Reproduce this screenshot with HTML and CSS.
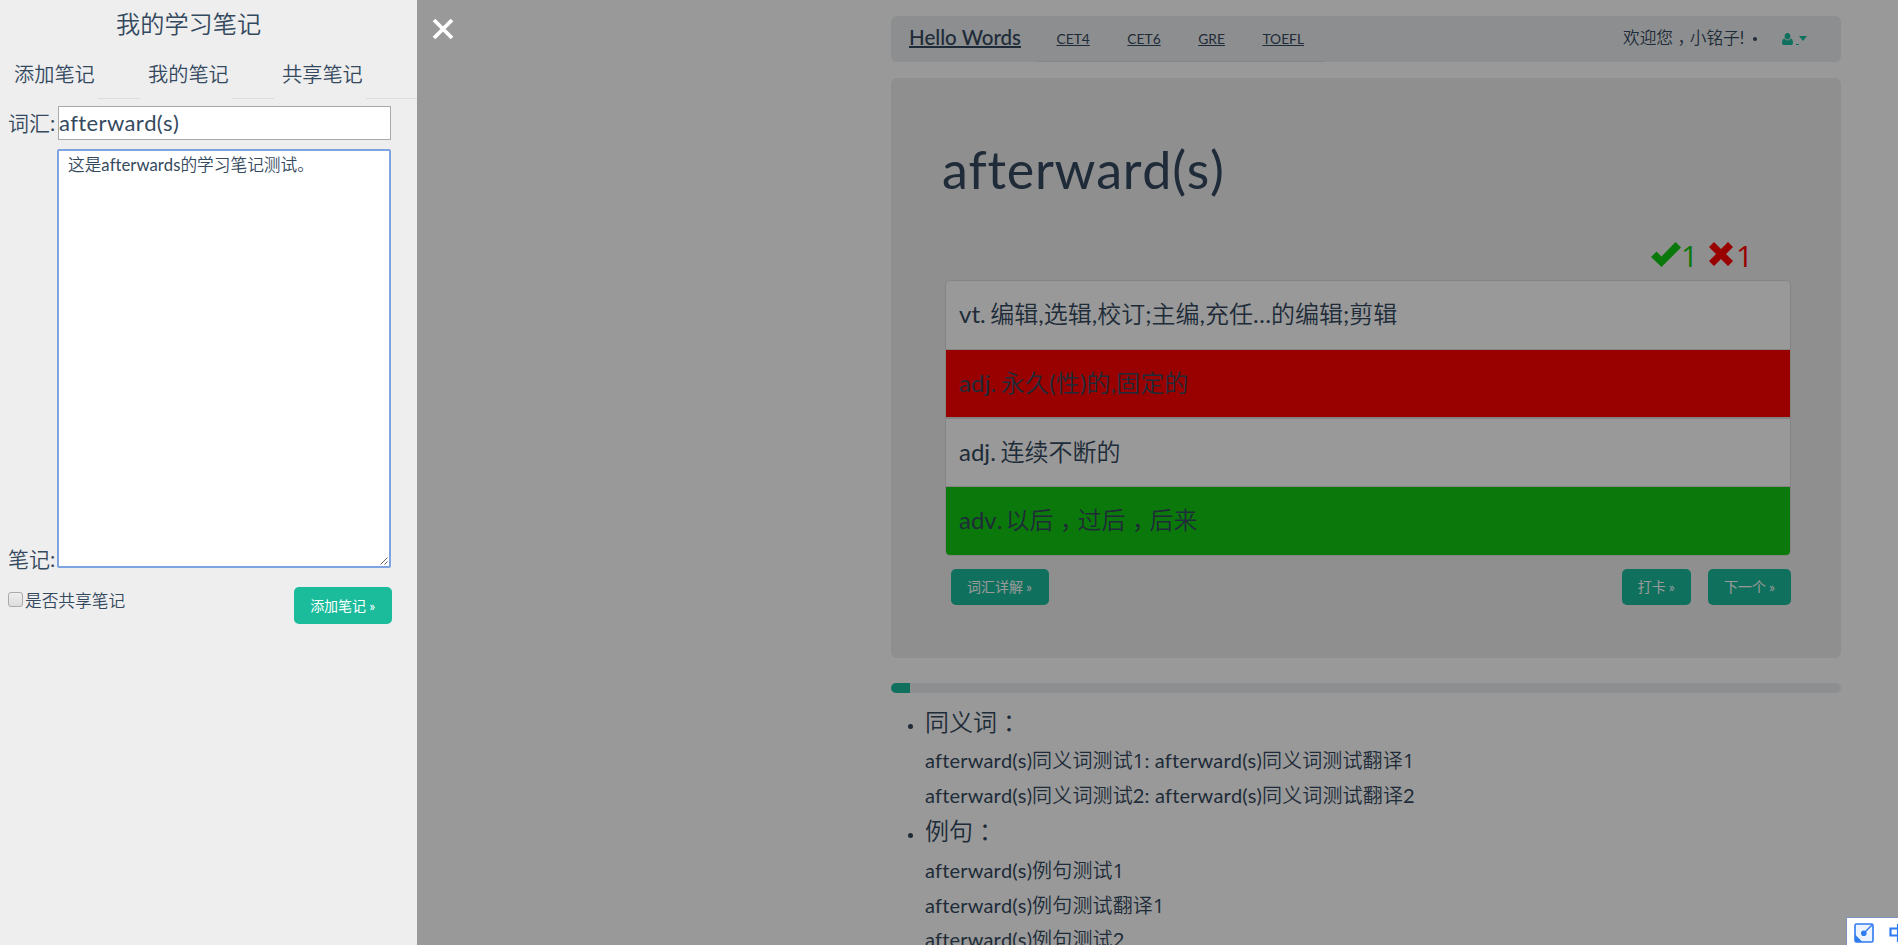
FILE: index.html
```html
<!DOCTYPE html>
<html lang="zh-CN">
<head>
<meta charset="utf-8">
<title>Hello Words</title>
<link rel="stylesheet" href="styles.css">
</head>
<body>
<div class="container">
  <nav class="navbar">
    <a class="brand">Hello Words</a>
    <div class="nav-links"><a>CET4</a><a>CET6</a><a>GRE</a><a>TOEFL</a></div>
    <div class="welcome">欢迎您<span class="comma">，</span>小铭子!</div>
    <i class="dot"></i>
    <a class="user">
      <svg class="user-icon" viewBox="0 0 11 12"><path d="M5.5 0C7.300 0 8.400 1.300 8.400 3.200S7.200 6.500 5.500 6.500 2.600 5.100 2.600 3.200 3.700 0 5.500 0ZM2.400 5.600C3.300 6.900 4.300 7.400 5.500 7.400S7.700 6.900 8.600 5.600C10.400 5.900 11 7.700 11 9.700 11 11.200 10.200 12 9 12H2C.8 12 0 11.200 0 9.700 0 7.700.6 5.900 2.400 5.600Z"/></svg><span class="gap"></span><svg class="caret" viewBox="0 0 8 5"><path d="M0 0h8L4 5z"/></svg>
    </a>
  </nav>
  <main class="card">
    <h1>afterward(s)</h1>
    <div class="score">
      <svg class="check" viewBox="0 0 30 25"><path d="M0 15L5.500 9.500 10.500 14.500 24.500 0 30 5.500 10.500 25Z"/></svg><span class="right">1</span>
      <svg class="cross" viewBox="0 0 24 24"><path d="M5 0L12 7 19 0 24 5 17 12 24 19 19 24 12 17 5 24 0 19 7 12 0 5Z"/></svg><span class="wrong">1</span>
    </div>
    <ul class="options">
      <li>vt. 编辑,选辑,校订;主编,充任…的编辑;剪辑</li>
      <li class="bad">adj. 永久(性)的,固定的</li>
      <li class="third">adj. 连续不断的</li>
      <li class="good">adv. 以后<span class="comma">，</span>过后<span class="comma">，</span>后来</li>
    </ul>
    <div class="actions">
      <a class="btn long">词汇详解 »</a>
      <a class="btn push">打卡 »</a>
      <a class="btn">下一个 »</a>
    </div>
  </main>
  <div class="progress"><div class="bar"></div></div>
  <section class="details">
    <h2>同义词<span class="colon">：</span></h2>
    <p>afterward(s)同义词测试<span class="num">1</span>: afterward(s)同义词测试翻译<span class="num">1</span></p>
    <p>afterward(s)同义词测试2: afterward(s)同义词测试翻译2</p>
    <h2 class="next">例句<span class="colon">：</span></h2>
    <p>afterward(s)例句测试<span class="num">1</span></p>
    <p>afterward(s)例句测试翻译<span class="num">1</span></p>
    <p>afterward(s)例句测试2</p>
  </section>
</div>

<div class="overlay">
  <svg class="close" viewBox="0 0 22 22"><path d="M2 2L20 20M20 2L2 20"/></svg>
</div>

<aside class="notes">
  <h3>我的学习笔记</h3>
  <div class="tabs"><a>添加笔记</a><a>我的笔记</a><a>共享笔记</a></div>
  <div class="field word"><label>词汇:</label><div class="input">afterward(s)</div></div>
  <div class="field memo"><label>笔记:</label>
    <div class="textarea">这是afterwards的学习笔记测试。<svg class="grip" viewBox="0 0 8 8"><path d="M.5 7.500L7.500.5M4.500 7.500L7.500 4.500"/></svg></div>
  </div>
  <div class="submit"><i class="checkbox"></i><span>是否共享笔记</span><a class="btn long">添加笔记 »</a></div>
</aside>

<div class="ime">
  <svg viewBox="0 0 20 20"><rect x="1" y="1" width="18" height="18" rx="1.500" fill="#eef4ff" stroke="#2f7bf0" stroke-width="1.600"/><path d="M1 11.500L8.500 19H1Z" fill="#2f7bf0"/><path d="M10 10L18 2" stroke="#2f7bf0" stroke-width="1.500"/><circle cx="9.800" cy="10.300" r="2.800" fill="#2f7bf0"/></svg>
  <svg class="zh" viewBox="0 0 18 20"><path d="M1.500 5.500h15v7h-15zM9 1v18" fill="none" stroke="#2f7bf0" stroke-width="2.200"/></svg>
</div>
</body>
</html>
```

FILE: styles.css
```css
* { box-sizing: border-box; }
body {
  margin: 0;
  height: 945px;
  overflow: hidden;
  background: #fff;
  color: #34495e;
  font-family: Lato, "Noto Sans CJK SC DemiLight", "Noto Sans CJK SC Light", "Noto Sans CJK SC", sans-serif;
  font-size: 16.7px;
  font-variant-ligatures: none;
}
h1, h2, h3, p, ul { margin: 0; padding: 0; font-weight: 400; list-style: none; }
.comma { margin: 0 .23em 0 .27em; font-feature-settings: "halt"; }
.colon { margin: 1px .25em 0; font-feature-settings: "halt"; }
.num { font-family: "Open Sans", sans-serif; line-height: 1; }

.container { width: 950px; margin-left: 891px; padding-top: 16px; }

.navbar {
  display: flex;
  height: 46px;
  padding-left: 18px;
  border-radius: 6px;
  background: #ebedef;
  line-height: 44px;
}
.brand { width: 129px; font-size: 20.5px; font-weight: 500; line-height: 43px; text-decoration: underline 2px; }
.nav-links {
  display: flex;
  width: 285px;
  gap: 37.5px;
  padding-left: 18.5px;
  border-bottom: 1px solid #ddd;
  font-size: 13.8px;
  line-height: 46px;
}
.nav-links a { text-decoration: underline; }
.welcome { margin-left: 300px; width: 130px; white-space: nowrap; }
.dot { width: 4px; height: 4px; margin-top: 21px; border-radius: 50%; background: #34495e; }
.user { display: flex; align-items: flex-start; margin: 17px 0 0 25px; }
.user svg { display: block; fill: #1abc9c; }
.user-icon { width: 11px; height: 12px; }
.gap { width: 3px; height: 1px; margin: 11px 0 0 3px; background: #1abc9c; }
.caret { width: 8px; height: 5px; margin-top: 3px; }

.card {
  height: 580px;
  margin-top: 16px;
  padding: 57px 50px 0 51px;
  border-radius: 6px;
  background: #eee;
  font-kerning: none;
}
h1 { font-size: 52px; line-height: 68px; letter-spacing: .7px; }
.score {
  display: flex;
  align-items: flex-start;
  justify-content: flex-end;
  height: 36px;
  margin-top: 39px;
  padding-right: 41px;
  font-family: "Open Sans", sans-serif;
  font-size: 30px;
  line-height: 27px;
}
.check { width: 30px; height: 25px; fill: #12c812; }
.right { width: 28px; color: #12c812; }
.cross { width: 24px; height: 24px; fill: #f00; }
.wrong { width: 17px; padding-left: 3px; color: #f00; }
.options {
  width: 846px;
  margin: 2px 0 0 3px;
  border: 1px solid #ddd;
  border-radius: 5px;
  overflow: hidden;
  background: #fff;
  font-size: 24px;
  word-spacing: -1.5px;
}
.options li { height: 69px; padding-left: 13px; border-bottom: 1px solid #ddd; line-height: 65px; }
.options .bad { border-bottom-width: 2px; background: #f00; letter-spacing: .13px; }
.options .third { height: 68px; }
.options .good { height: 68px; border: 0; background: #12c812; word-spacing: -3px; }
.actions { display: flex; gap: 17px; padding: 13px 0 0 9px; }
.push { margin-left: auto; }
.btn {
  display: block;
  height: 36px;
  padding: 0 16px;
  border-radius: 5px;
  background: #1abc9c;
  color: #fff;
  font-family: Lato, "Noto Sans CJK SC", sans-serif;
  font-size: 14px;
  line-height: 36px;
  word-spacing: -.5px;
  white-space: nowrap;
}
.long { width: 98px; }

.progress { height: 10px; margin-top: 25px; border-radius: 5px; overflow: hidden; background: #ebedef; }
.bar { width: 19px; height: 10px; background: #1abc9c; }
.details { padding: 12px 0 0 34px; font-size: 20px; line-height: 34.500px; font-kerning: none; }
.details p { letter-spacing: .14px; }
.details h2 { display: flex; align-items: center; height: 38px; font-size: 24px; line-height: 34px; padding-bottom: 5px; }
.details .next { height: 41px; padding-bottom: 4px; }
.details h2::before {
  content: "";
  width: 5px;
  height: 5px;
  margin: 10px 12px 0 -17px;
  border-radius: 50%;
  background: #34495e;
}

.overlay { position: fixed; inset: 0; padding: 18px 0 0 432px; background: rgba(0, 0, 0, .4); }
.close { display: block; width: 22px; height: 22px; fill: none; stroke: #fff; stroke-width: 3.8; }

.notes { position: fixed; left: 0; top: 0; bottom: 0; width: 417px; background: #eee; font-kerning: none; }
.notes h3 { padding-left: 116px; font-size: 24.2px; line-height: 48px; }
.tabs { display: flex; height: 51px; padding-left: 6px; font-size: 20.2px; line-height: 53px; }
.tabs a { width: 134px; padding-left: 8px; background: linear-gradient(#ddd, #ddd) 92px 100% / 42px 1px no-repeat; white-space: nowrap; }
.tabs a:last-child { width: 143px; background-size: 51px 1px; }
.field { display: flex; padding-left: 8px; font-size: 22px; }
.field label { width: 50px; font-size: 21px; white-space: nowrap; }
.word { margin-top: 7px; line-height: 33px; }
.input { width: 333px; height: 34px; border: 1px solid #a9a9a9; background: #fff; line-height: 32px; letter-spacing: .35px; }
.memo { margin-top: 9px; align-items: flex-end; }
.memo label { line-height: 19px; }
.textarea {
  position: relative;
  width: 334px;
  height: 419px;
  margin-left: -1px;
  padding: 0 9px;
  border: 2px solid #7ea3e0;
  border-radius: 2px;
  background: #fff;
  font-size: 16.700px;
  line-height: 29px;
}
.grip { position: absolute; right: 1px; bottom: 1px; width: 8px; height: 8px; fill: none; stroke: #666; }
.submit { display: flex; margin-top: 19px; padding-left: 8px; line-height: 29px; }
.checkbox {
  width: 15px;
  height: 15px;
  margin: 5px 2px 0 0;
  border: 1px solid #aaa;
  border-radius: 3px;
  background: linear-gradient(#eee, #ddd);
}
.submit .btn { height: 37px; margin-left: 169px; line-height: 38px; }

.ime {
  position: fixed;
  right: 0;
  bottom: 0;
  display: flex;
  width: 52px;
  height: 28px;
  padding: 5px 0 0 7px;
  gap: 15px;
  overflow: hidden;
  border: solid #8090bf;
  border-width: 1px 0 0 1px;
  background: #fff;
}
.ime svg { flex: none; width: 20px; height: 20px; }
.ime .zh { width: 18px; }
```
